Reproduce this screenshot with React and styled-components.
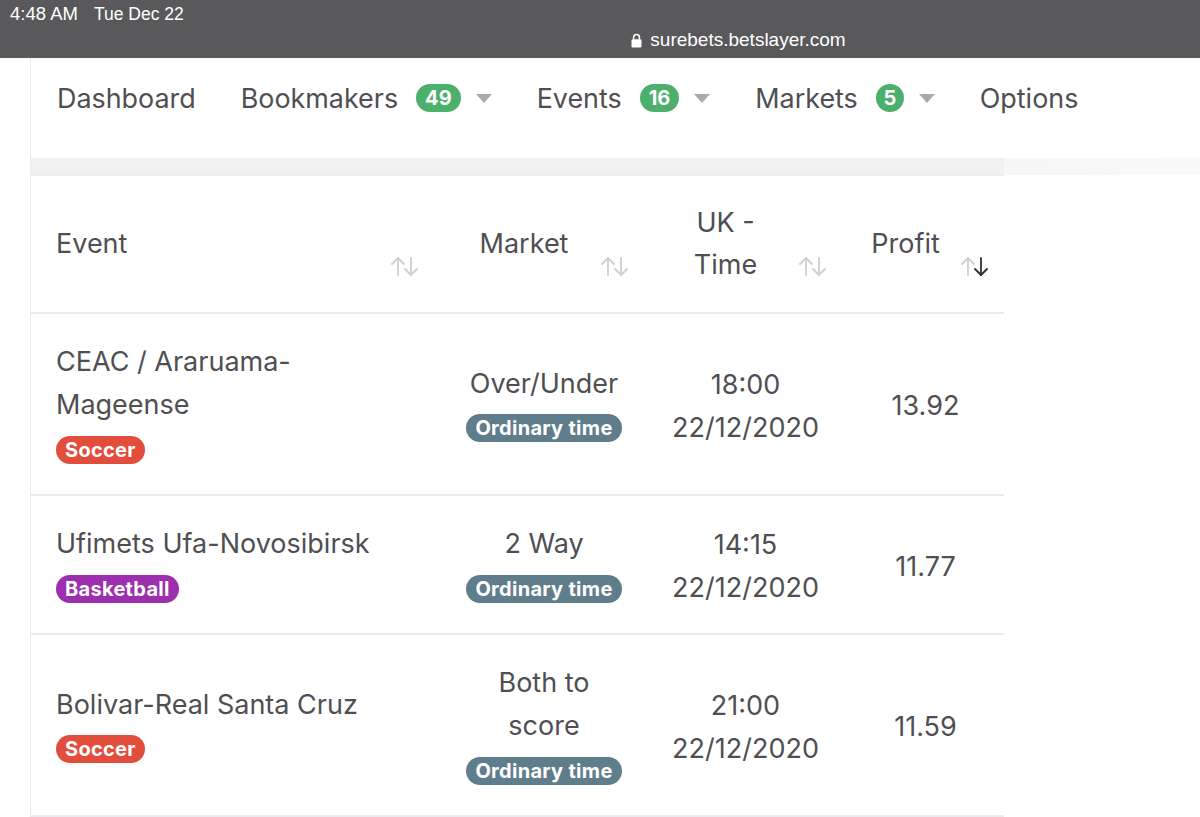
import React from "react";
import styled, { createGlobalStyle } from "styled-components";

const GlobalStyle = createGlobalStyle`
  body {
    margin: 0;
    background: #ffffff;
    font-family: Inter, "Liberation Sans", Arial, sans-serif;
    color: #4f4f53;
  }
`;

const rows = [
  {
    event: "CEAC / Araruama-Mageense",
    sport: "Soccer",
    market: "Over/Under",
    time: "18:00",
    date: "22/12/2020",
    profit: "13.92",
  },
  {
    event: "Ufimets Ufa-Novosibirsk",
    sport: "Basketball",
    market: "2 Way",
    time: "14:15",
    date: "22/12/2020",
    profit: "11.77",
  },
  {
    event: "Bolivar-Real Santa Cruz",
    sport: "Soccer",
    market: "Both to score",
    time: "21:00",
    date: "22/12/2020",
    profit: "11.59",
  },
];

const sportColors = {
  Soccer: "#e24d3c",
  Basketball: "#9c2fae",
};

const SortIcon = ({ active }) => (
  <svg width="30" height="21" viewBox="0 0 30 21" fill="none">
    <g stroke="#cfcfd2" strokeWidth="1.8" strokeLinecap="round" strokeLinejoin="round">
      <path d="M8 2 V19" />
      <path d="M2 8 L8 2 L14 8" />
    </g>
    <g
      stroke={active ? "#2f2f33" : "#cfcfd2"}
      strokeWidth="1.8"
      strokeLinecap="round"
      strokeLinejoin="round"
    >
      <path d="M21 2 V19" />
      <path d="M15 13 L21 19 L27 13" />
    </g>
  </svg>
);

const LockIcon = () => (
  <svg width="11" height="15" viewBox="0 0 11 15">
    <path
      d="M2.6 6.5 V4.3 a2.9 2.9 0 0 1 5.8 0 V6.5"
      fill="none"
      stroke="#fff"
      strokeWidth="1.5"
    />
    <rect x="0.5" y="6.2" width="10" height="8.3" rx="1.3" fill="#fff" />
  </svg>
);

const Caret = () => (
  <svg width="16" height="9" viewBox="0 0 16 9">
    <path d="M0 0 H16 L8 9 Z" fill="#ababaf" />
  </svg>
);

const App = () => {
  return (
    <>
      <GlobalStyle />
      <StatusBar>
        <Clock>
          <span>4:48 AM</span>
          <span>Tue Dec 22</span>
        </Clock>
        <Url>
          <LockIcon />
          surebets.betslayer.com
        </Url>
      </StatusBar>
      <Main>
        <Nav>
          <NavItem>Dashboard</NavItem>
          <NavItem>
            Bookmakers <Count>49</Count>
            <Caret />
          </NavItem>
          <NavItem>
            Events <Count>16</Count>
            <Caret />
          </NavItem>
          <NavItem>
            Markets <Count $round>5</Count>
            <Caret />
          </NavItem>
          <NavItem>Options</NavItem>
        </Nav>
        <Band />
        <Table>
          <colgroup>
            <col style={{ width: 413 }} />
            <col style={{ width: 200 }} />
            <col style={{ width: 203 }} />
            <col style={{ width: 157 }} />
          </colgroup>
          <thead>
            <tr>
              <Th $align="left">
                Event
                <SortSpot $right={24}>
                  <SortIcon />
                </SortSpot>
              </Th>
              <Th>
                Market
                <SortSpot>
                  <SortIcon />
                </SortSpot>
              </Th>
              <Th>
                UK -<br />
                Time
                <SortSpot $right={19}>
                  <SortIcon />
                </SortSpot>
              </Th>
              <Th>
                Profit
                <SortSpot>
                  <SortIcon active />
                </SortSpot>
              </Th>
            </tr>
          </thead>
          <tbody>
            {rows.map((r) => (
              <tr key={r.event}>
                <Td $align="left">
                  <EventName>{r.event}</EventName>
                  <BadgeLine $align="flex-start">
                    <Badge $bg={sportColors[r.sport]}>{r.sport}</Badge>
                  </BadgeLine>
                </Td>
                <Td>
                  <MarketName>{r.market}</MarketName>
                  <BadgeLine>
                    <Badge $bg="#607d8b">Ordinary time</Badge>
                  </BadgeLine>
                </Td>
                <Td>
                  {r.time}
                  <br />
                  {r.date}
                </Td>
                <Td>{r.profit}</Td>
              </tr>
            ))}
          </tbody>
        </Table>
      </Main>
    </>
  );
};

const StatusBar = styled.header`
  height: 58px;
  background: #59595b;
  color: #ffffff;
  font-family: "Liberation Sans", Arial, sans-serif;
`;

const Clock = styled.div`
  display: flex;
  gap: 16px;
  padding: 4px 0 0 10px;
  font-size: 17.5px;
  line-height: 20px;
  span:first-child {
    font-size: 18.5px;
  }
`;

const Url = styled.div`
  display: flex;
  align-items: center;
  justify-content: center;
  gap: 8px;
  margin-left: 277px;
  padding-top: 6px;
  font-size: 19px;
  line-height: 20px;
`;

const Main = styled.main`
  margin-left: 30px;
  border-left: 1px solid #ececee;
  min-height: 759px;
`;

const Nav = styled.nav`
  height: 100px;
  display: flex;
  align-items: center;
  gap: 45px;
  padding: 0 0 20px 26px;
  box-sizing: border-box;
`;

const NavItem = styled.div`
  display: flex;
  align-items: center;
  font-size: 26.9px;
  color: #4f4f53;
  svg {
    margin-left: 15px;
  }
`;

const Count = styled.span`
  margin-left: 18px;
  display: inline-flex;
  align-items: center;
  justify-content: center;
  height: 28px;
  min-width: ${(p) => (p.$round ? "28px" : "auto")};
  padding: ${(p) => (p.$round ? "0" : "0 9px")};
  box-sizing: border-box;
  border-radius: 14px;
  background: #4cb06c;
  color: #ffffff;
  font-size: 20px;
  font-weight: 700;
`;

const Band = styled.div`
  height: 17px;
  background: linear-gradient(
    to right,
    #f1f1f2 0,
    #f1f1f2 973px,
    #f7f7f7 973px,
    #f9f9f9 100%
  );
`;

const Table = styled.table`
  width: 973px;
  border-collapse: collapse;
  table-layout: fixed;
  border-top: 1px solid #ededef;
  font-size: 27px;
  color: #4f4f53;
  tbody tr {
    border-top: 2px solid #ebebed;
  }
  tbody tr:last-child {
    border-bottom: 2px solid #ebebed;
  }
`;

const Th = styled.th`
  position: relative;
  font-weight: 400;
  text-align: ${(p) => p.$align || "center"};
  padding: 26px 50px 26px ${(p) => (p.$align === "left" ? "25px" : "10px")};
  line-height: 42px;
  vertical-align: middle;
`;

const SortSpot = styled.span`
  position: absolute;
  right: ${(p) => p.$right || 14}px;
  top: 80px;
  display: flex;
`;

const Td = styled.td`
  text-align: ${(p) => p.$align || "center"};
  padding: 26px 10px 23px ${(p) => (p.$align === "left" ? "25px" : "10px")};
  line-height: 43px;
  vertical-align: middle;
`;

const EventName = styled.div`
  max-width: 335px;
`;

const MarketName = styled.div`
  padding: 0 12px;
`;

const BadgeLine = styled.div`
  margin-top: 2px;
  height: 43px;
  display: flex;
  align-items: center;
  justify-content: ${(p) => p.$align || "center"};
`;

const Badge = styled.span`
  display: inline-flex;
  align-items: center;
  height: 28px;
  padding: 0 9px;
  border-radius: 14px;
  background: ${(p) => p.$bg};
  color: #ffffff;
  font-size: 20px;
  font-weight: 700;
  letter-spacing: 0.3px;
  line-height: 1;
`;

export default App;
